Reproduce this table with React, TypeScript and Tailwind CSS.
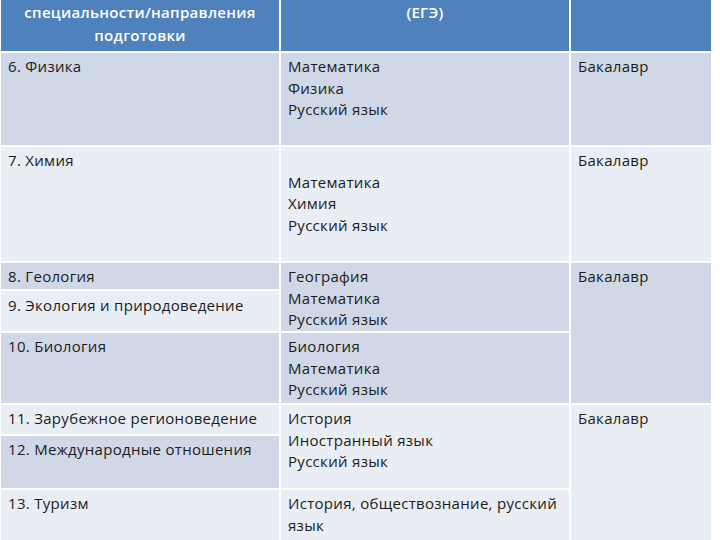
import React from "react";

const DARK = "bg-[#d0d8e8]";
const LIGHT = "bg-[#e9edf4]";

const Cell: React.FC<{ className: string; children?: React.ReactNode }> = ({
  className,
  children,
}) => (
  <div className={`px-[7px] pt-[3px] text-[#1c1c1c] ${className}`}>{children}</div>
);

const Lines: React.FC<{ items: string[] }> = ({ items }) => (
  <>
    {items.map((t, i) => (
      <div key={i}>{t === "" ? "\u00a0" : t}</div>
    ))}
  </>
);

export default function App() {
  return (
    <div
      className="w-[720px] h-[540px] overflow-hidden bg-white"
      style={{ fontFamily: '"Open Sans", "Noto Sans", sans-serif' }}
    >
      <div className="ml-[1px] mt-[-25px] w-[710px] grid grid-cols-[278px_288px_140px] grid-rows-[76px_92px_114px_26px_40px_70px_29px_52px_70px] gap-[2px] text-[15px] leading-[21.5px] tracking-[0.3px]">
        {/* header */}
        <div className="col-start-1 row-start-1 bg-[#4f81bd] text-white font-semibold text-center pt-[3px] leading-[23px]">
          <div>Наименование</div>
          <div>специальности/направления</div>
          <div>подготовки</div>
        </div>
        <div className="col-start-2 row-start-1 bg-[#4f81bd] text-white font-semibold text-center pt-[3px] leading-[23px]">
          <div>Вступительные испытания</div>
          <div>(ЕГЭ)</div>
        </div>
        <div className="col-start-3 row-start-1 bg-[#4f81bd] text-white font-semibold text-center pt-[3px] leading-[23px]">
          <div>Квалификация</div>
        </div>

        {/* 6 */}
        <Cell className={`col-start-1 row-start-2 ${DARK}`}>6. Физика</Cell>
        <Cell className={`col-start-2 row-start-2 ${DARK}`}>
          <Lines items={["Математика", "Физика", "Русский язык"]} />
        </Cell>
        <Cell className={`col-start-3 row-start-2 ${DARK}`}>Бакалавр</Cell>

        {/* 7 */}
        <Cell className={`col-start-1 row-start-3 ${LIGHT}`}>7. Химия</Cell>
        <Cell className={`col-start-2 row-start-3 ${LIGHT}`}>
          <Lines items={["", "Математика", "Химия", "Русский язык"]} />
        </Cell>
        <Cell className={`col-start-3 row-start-3 ${LIGHT}`}>Бакалавр</Cell>

        {/* 8-10 */}
        <Cell className={`col-start-1 row-start-4 ${DARK}`}>8. Геология</Cell>
        <Cell className={`col-start-1 row-start-5 ${LIGHT} pt-[4px]`}>
          9. Экология и природоведение
        </Cell>
        <Cell className={`col-start-2 row-start-4 row-span-2 ${DARK}`}>
          <Lines items={["География", "Математика", "Русский язык"]} />
        </Cell>
        <Cell className={`col-start-3 row-start-4 row-span-3 ${DARK}`}>Бакалавр</Cell>
        <Cell className={`col-start-1 row-start-6 ${DARK}`}>10. Биология</Cell>
        <Cell className={`col-start-2 row-start-6 ${DARK}`}>
          <Lines items={["Биология", "Математика", "Русский язык"]} />
        </Cell>

        {/* 11-13 */}
        <Cell className={`col-start-1 row-start-7 ${LIGHT}`}>
          11. Зарубежное регионоведение
        </Cell>
        <Cell className={`col-start-1 row-start-8 ${DARK} pt-[3px]`}>
          12. Международные отношения
        </Cell>
        <Cell className={`col-start-2 row-start-7 row-span-2 ${LIGHT}`}>
          <Lines items={["История", "Иностранный язык", "Русский язык"]} />
        </Cell>
        <Cell className={`col-start-3 row-start-7 row-span-3 ${LIGHT}`}>Бакалавр</Cell>
        <Cell className={`col-start-1 row-start-9 ${LIGHT}`}>13. Туризм</Cell>
        <Cell className={`col-start-2 row-start-9 ${LIGHT}`}>
          История, обществознание, русский язык
        </Cell>
      </div>
    </div>
  );
}
